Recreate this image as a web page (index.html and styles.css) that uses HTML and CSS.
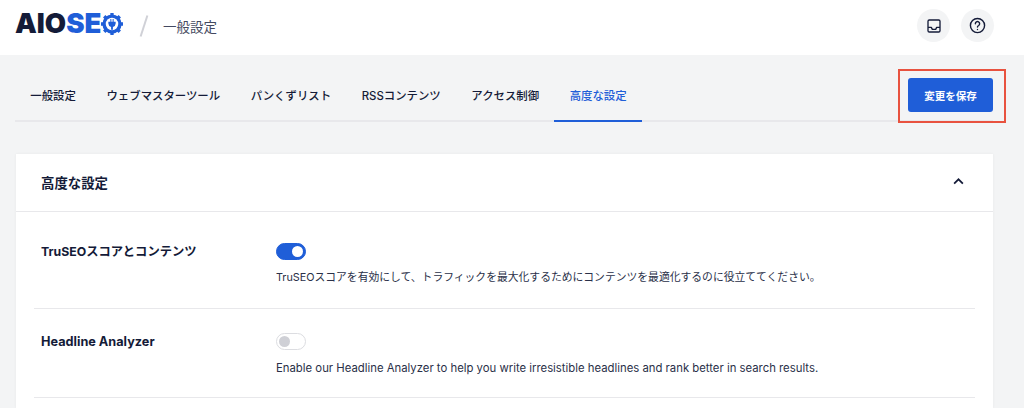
FILE: index.html
```html
<!DOCTYPE html>
<html lang="ja">
<head>
  <meta charset="UTF-8" />
  <title>AIOSEO 一般設定</title>
  <link rel="stylesheet" href="styles.css">
</head>
<body>
  <header class="topbar">
    <div class="brand">
      <div class="logo-wrap">
        <span class="logo">AIO<span class="logo-blue">SE</span></span>
        <svg class="logo-gear" viewBox="0 0 24 24" aria-hidden="true">
          <circle cx="12" cy="12" r="10.500" fill="#1f5ed8"/>
          <g stroke="#1f5ed8" stroke-width="3.600">
            <path d="M12 0v24M0 12h24M3.500 3.500l17 17M20.500 3.500l-17 17"/>
          </g>
          <circle cx="12" cy="12" r="6.800" fill="#fff"/>
          <path fill="#1f5ed8" d="M8 9.500h2.200V6.500h1.100v3h1.400v-3h1.100v3H16v2a4 4 0 0 1-3 3.700v3h-2v-3a4 4 0 0 1-3-3.700z"/>
        </svg>
      </div>
      <span class="slash"></span>
      <span class="page-name">一般設定</span>
    </div>
    <div class="top-actions">
      <button class="round-btn" aria-label="お知らせ">
        <svg viewBox="0 0 24 24" width="16" height="16" fill="none" stroke="#141b38" stroke-width="2" stroke-linejoin="round">
          <rect x="3" y="3" width="18" height="18" rx="2"/>
          <path d="M3 14h5l1.500 3h5l1.500-3h5"/>
        </svg>
      </button>
      <button class="round-btn" aria-label="ヘルプ">
        <svg viewBox="0 0 24 24" width="17" height="17" fill="none" stroke="#141b38" stroke-width="2" stroke-linecap="round">
          <circle cx="12" cy="12" r="10"/>
          <path d="M9 9.500a3 3 0 1 1 4.600 2.500c-1 .6-1.600 1.200-1.600 2.200"/>
          <path d="M12 17.500v.1"/>
        </svg>
      </button>
    </div>
  </header>

  <main class="content">
    <div class="tabs-row">
      <nav class="tabs">
        <a class="tab">一般設定</a>
        <a class="tab">ウェブマスターツール</a>
        <a class="tab">パンくずリスト</a>
        <a class="tab">RSSコンテンツ</a>
        <a class="tab">アクセス制御</a>
        <a class="tab active">高度な設定</a>
      </nav>
      <div class="save-wrap">
        <button class="save-btn">変更を保存</button>
      </div>
    </div>

    <section class="card">
      <div class="card-head">
        <h2>高度な設定</h2>
        <svg viewBox="0 0 12 8" width="11" height="7" fill="none" stroke="#141b38" stroke-width="2">
          <path d="M1 6.500l5-5 5 5"/>
        </svg>
      </div>
      <div class="card-body">
        <div class="row row-first">
          <div class="row-name">TruSEOスコアとコンテンツ</div>
          <div class="row-main">
            <span class="toggle on"></span>
            <p class="desc-ja">TruSEOスコアを有効にして、トラフィックを最大化するためにコンテンツを最適化するのに役立ててください。</p>
          </div>
        </div>
        <div class="row">
          <div class="row-name">Headline Analyzer</div>
          <div class="row-main">
            <span class="toggle"></span>
            <p class="desc-en">Enable our Headline Analyzer to help you write irresistible headlines and rank better in search results.</p>
          </div>
        </div>
      </div>
    </section>
  </main>
</body>
</html>
```

FILE: styles.css
```css
* {
  box-sizing: border-box;
}
html, body {
  height: 408px;
  overflow: hidden;
}
body {
  margin: 0;
  background: #f3f4f5;
  color: #141b38;
  font-family: Inter, "Noto Sans CJK JP", sans-serif;
}
.topbar {
  height: 55px;
  background: #fff;
  display: flex;
  align-items: center;
  justify-content: space-between;
  padding: 0 30px 4px 15px;
}
.brand {
  display: flex;
  align-items: center;
}
.logo-wrap {
  display: flex;
  align-items: center;
  width: 110px;
  margin-bottom: 3px;
}
.logo {
  font-size: 27.500px;
  line-height: 1;
  font-weight: 900;
  letter-spacing: 0;
  color: #141b38;
}
.logo-blue {
  color: #1f5ed8;
}
.logo-gear {
  width: 22px;
  height: 22px;
  flex-shrink: 0;
}
.slash {
  width: 2px;
  height: 22px;
  margin: 0 18px;
  background: #d0d1d7;
  transform: rotate(18deg);
}
.page-name {
  font-size: 13.500px;
  color: #434960;
}
.top-actions {
  display: flex;
  gap: 11px;
}
.round-btn {
  width: 33px;
  height: 33px;
  border: none;
  border-radius: 50%;
  background: #f3f4f5;
  padding: 0;
  display: flex;
  align-items: center;
  justify-content: center;
}
.content {
  padding: 0 31px 0 15px;
}
.tabs-row {
  height: 67px;
  display: flex;
  justify-content: space-between;
  border-bottom: 2px solid #e8e8eb;
}
.tabs {
  display: flex;
}
.tab {
  padding: 33px 15.300px 0;
  margin-bottom: -2px;
  font-size: 11.400px;
  font-weight: 500;
  line-height: 16px;
  color: #141b38;
  border-bottom: 2px solid transparent;
}
.tab.active {
  color: #1f5ed8;
  border-bottom-color: #1f5ed8;
}
.save-wrap {
  position: relative;
  padding-top: 23px;
}
.save-wrap::after {
  content: "";
  position: absolute;
  top: 14px;
  left: -10px;
  right: -13px;
  height: 50px;
  border: 2px solid #e8523f;
}
.save-btn {
  width: 85px;
  height: 34px;
  border: none;
  border-radius: 3px;
  background: #1f5ed8;
  color: #fff;
  font-family: inherit;
  font-size: 10.500px;
  font-weight: 700;
}
.card {
  margin: 32px 0 0 1px;
  height: 254px;
  background: #fff;
  box-shadow: 0 0 3px rgba(0, 0, 0, 0.05);
}
.card-head {
  height: 58px;
  padding: 0 29px 2px 25px;
  display: flex;
  align-items: center;
  justify-content: space-between;
  border-bottom: 1px solid #e8e8eb;
}
.card-head h2 {
  margin: 0;
  font-size: 13.400px;
  font-weight: 700;
}
.card-body {
  padding: 0 18px;
}
.row {
  display: flex;
  height: 89px;
  padding: 24px 7px 0;
  border-bottom: 1px solid #e8e8eb;
}
.row-first {
  height: 97px;
  padding-top: 31px;
}
.row-name {
  width: 235px;
  flex-shrink: 0;
  font-size: 12.700px;
  font-weight: 700;
  line-height: 18px;
}
.row-first .row-name {
  font-size: 12.300px;
}
.row-main p {
  margin: 10px 0 0;
  line-height: 16px;
  color: #2a3048;
}
.desc-ja {
  font-size: 10.800px;
}
.desc-en {
  font-size: 11.330px;
}
.toggle {
  display: block;
  position: relative;
  width: 30px;
  height: 17px;
  border-radius: 9px;
  background: #fff;
  border: 1px solid #dcdde1;
}
.toggle::after {
  content: "";
  position: absolute;
  top: 2px;
  left: 2px;
  width: 11px;
  height: 11px;
  border-radius: 50%;
  background: #cfd0d6;
}
.toggle.on {
  background: #1f5ed8;
  border-color: #1f5ed8;
}
.toggle.on::after {
  left: 15px;
  background: #fff;
}
```
